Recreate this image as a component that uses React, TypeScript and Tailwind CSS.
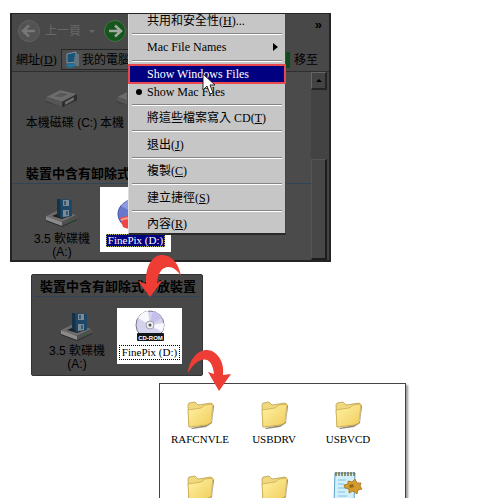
import React from "react";

const SERIF = "font-['Liberation_Serif','Noto_Sans_CJK_TC',serif]";
const SANS = "font-['Liberation_Sans','Noto_Sans_CJK_TC',sans-serif]";

function DriveIcon() {
  return (
    <svg width="34" height="20" viewBox="0 0 34 20" aria-hidden="true">
      <path d="M1 9 15 2l17 4v6L18 19 1 14z" fill="#343434" />
      <path d="M1 9 15 2l17 4-15 8z" fill="#6a6a6a" />
      <path d="M7 8.500 16 4l9 2-9 4z" fill="#585858" stroke="#7c7c7c" strokeWidth=".6" />
      <path d="M1 9v4l16 6v-5z" fill="#565656" />
      <path d="m17 14 15-8v6l-15 7z" fill="#2d2d2d" />
      <path d="m20 14 9-5v3l-9 5z" fill="#6c6c6c" />
    </svg>
  );
}

function FloppyIcon() {
  return (
    <svg width="34" height="30" viewBox="0 0 34 30" aria-hidden="true">
      <path d="M1 18 13 12l19 5v5l-15 7L1 23z" fill="#2b2b2b" />
      <path d="M1 18 13 12l19 5-15 7z" fill="#6c6c6c" />
      <path d="M1 18v4l16 6v-4z" fill="#8b8b8b" />
      <path d="m17 24 15-7v4l-15 7z" fill="#505050" />
      <path d="m7 18 7-3 11 3-8 3z" fill="#202020" />
      <path d="m12 1 4 0v19l-4-3z" fill="#163247" />
      <path d="m15 1 12 1v16l-11 2z" fill="#1c4766" />
      <path d="m18 2 6 0v6l-6 0z" fill="#7d8a93" />
      <path d="m18 12 6 0v6l-6 1z" fill="#7d8a93" />
      <path d="M20 3v4M22 13v4" stroke="#234b69" strokeWidth="1.500" />
      <path d="m23 24 5-2" stroke="#315c38" strokeWidth="1.500" />
    </svg>
  );
}

function PhotoDiscIcon() {
  return (
    <svg width="38" height="32" viewBox="0 0 38 32" aria-hidden="true">
      <ellipse cx="19" cy="16" rx="18" ry="15" fill="#6878cc" stroke="#4251a8" />
      <path d="M19 16 4 8a18 15 0 0 1 15-7z" fill="#8d9ae0" />
      <path d="M3 20c5-3 26-3 32 0l-4 9c-6 3-20 3-25 0z" fill="#f04444" />
      <path d="M4 22c4-2 8-2 12-1" stroke="#ff9b91" strokeWidth="2" fill="none" />
    </svg>
  );
}

function CdRomIcon() {
  return (
    <svg width="32" height="32" viewBox="0 0 32 32" aria-hidden="true">
      <circle cx="16" cy="15" r="14" fill="#d5d2ee" stroke="#77758e" />
      <path d="M16 15 4 8a14 14 0 0 1 10-7z" fill="#f8f8ff" />
      <path d="m16 15 12 7a14 14 0 0 0 2-9z" fill="#f7f7ff" />
      <path d="M16 15 28 8a14 14 0 0 0-9-7z" fill="#c4c0ea" />
      <circle cx="16" cy="15" r="4" fill="#eee" stroke="#a09db5" />
      <circle cx="16" cy="15" r="1.500" fill="#555" />
      <rect x="3" y="23" width="27" height="8" rx="1" fill="#101515" />
      <text x="16.500" y="29.500" textAnchor="middle" fontSize="6" fontWeight="700" fontFamily="Liberation Sans, sans-serif" fill="#fff">
        CD-ROM
      </text>
    </svg>
  );
}

function FolderIcon() {
  return (
    <svg width="28" height="28" viewBox="0 0 28 28" aria-hidden="true">
      <defs>
        <linearGradient id="folder" x1="0" y1="0" x2="1" y2="1">
          <stop offset="0" stopColor="#fff3a6" />
          <stop offset="1" stopColor="#f0cc5a" />
        </linearGradient>
      </defs>
      <path d="m5 27 16-3 5-4 1-16 1 1-2 17-6 4-14 2z" fill="#8d8670" />
      <path d="M2 4 3 2l6-1 2 2 1 1 13-2 1 1-2 18-6 3-15 2z" fill="#f0d87e" stroke="#b39542" strokeWidth=".7" />
      <path d="m2 9 13-2 4-3 8-1-2 19-5 2-17 2z" fill="url(#folder)" stroke="#c7a448" strokeWidth=".7" />
    </svg>
  );
}

function NotepadIcon() {
  return (
    <svg width="30" height="34" viewBox="0 0 30 34" aria-hidden="true">
      <path d="M2 3h20l-1 30H1z" fill="#d3effc" stroke="#5ba2c8" />
      <path d="M3 2v4M6 2v4M9 2v4M12 2v4M15 2v4M18 2v4M21 2v4" stroke="#777044" strokeWidth="1.500" />
      <path d="M5 10h8M5 14h6M5 18h8M5 22h7M5 26h9" stroke="#7cc3e0" />
      <path d="m11 15 4-1 0-3 4 1 3-3 2 4 4 0-1 3 2 3-4 1-1 4-4-3-4 2 0-4-4-1z" fill="#d59b2c" stroke="#9a7222" strokeWidth=".8" />
      <path d="m16 15 4-1 1 3-4 1z" fill="#8c681f" />
    </svg>
  );
}

function CursorIcon() {
  return (
    <svg width="14" height="22" viewBox="0 0 14 22" aria-hidden="true" className="pointer-events-none absolute left-[73px] top-[59px]">
      <path d="M1 1v16l4-4 3 8 3-1-3-8h5z" fill="#fff" stroke="#111" strokeWidth=".9" />
    </svg>
  );
}

function NavIcon({ forward = false }: { forward?: boolean }) {
  return (
    <svg width="24" height="24" viewBox="0 0 24 24" aria-hidden="true">
      <circle cx="12" cy="12" r="10.500" fill={forward ? "#16551b" : "#535353"} stroke={forward ? "#417544" : "#626262"} />
      <path d={forward ? "M6 12h11M12 6.500l6 5.500-6 5.500" : "M18 12H7M12 6.500 6 12l6 5.500"} fill="none" stroke={forward ? "#a3aaa3" : "#777"} strokeWidth="2.500" />
    </svg>
  );
}

function Item({ icon, children, className = "" }: { icon: React.ReactNode; children: React.ReactNode; className?: string }) {
  return (
    <figure className={"flex flex-col items-center " + className}>
      {icon}
      <figcaption className="whitespace-nowrap text-center text-[12px] leading-[13px]">{children}</figcaption>
    </figure>
  );
}

function Separator() {
  return (
    <div role="separator" className="flex flex-1 flex-col justify-center px-[3px]">
      <div className="h-px bg-[#858585]" />
      <div className="h-px bg-white" />
    </div>
  );
}

function MenuItem({ children, selected = false }: { children: React.ReactNode; selected?: boolean }) {
  return (
    <button
      type="button"
      role="menuitem"
      className={
        "relative flex h-[18px] w-full shrink-0 items-center whitespace-nowrap pl-[18px] text-left text-[12px] leading-[18px] " +
        (selected ? "bg-[#000080] text-white outline-2 -outline-offset-1 outline-[#e8484e]" : "text-black")
      }
    >
      {children}
    </button>
  );
}

function ContextMenu() {
  return (
    <div role="menu" className={"absolute left-[116px] top-0 h-[221px] w-[158px] border-b-2 border-l border-r border-b-[#292929] border-l-[#ddd] border-r-[#444] bg-[#c6c6c6] " + SERIF}>
      <div className="-mt-[2px] flex h-[221px] flex-col">
        <MenuItem>共用和安全性(<u>H</u>)...</MenuItem>
        <Separator />
        <MenuItem>
          Mac File Names
          <svg width="5" height="8" viewBox="0 0 5 8" aria-hidden="true" className="ml-auto mr-[7px]">
            <path d="m0 0 5 4-5 4z" />
          </svg>
        </MenuItem>
        <Separator />
        <MenuItem selected>Show Windows Files</MenuItem>
        <MenuItem>
          <span className="absolute left-[7px] size-[6px] rounded-full bg-black" />
          Show Mac Files
        </MenuItem>
        <Separator />
        <MenuItem>將這些檔案寫入 CD(<u>T</u>)</MenuItem>
        <Separator />
        <MenuItem>退出(<u>J</u>)</MenuItem>
        <Separator />
        <MenuItem>複製(<u>C</u>)</MenuItem>
        <Separator />
        <MenuItem>建立捷徑(<u>S</u>)</MenuItem>
        <Separator />
        <MenuItem>內容(<u>R</u>)</MenuItem>
      </div>
      <CursorIcon />
    </div>
  );
}

function GroupTitle({ children, className }: { children: React.ReactNode; className: string }) {
  return (
    <h2 className={"overflow-hidden whitespace-nowrap border-b border-[#304456] text-[13px] font-bold leading-[18px] " + className}>
      {children}
    </h2>
  );
}

function ExplorerWindow() {
  return (
    <section className="relative ml-[10px] flex h-[249px] w-[321px] shrink-0 flex-col border-2 border-t border-[#242424] bg-[#4b4b4b]">
      <div className="flex h-[34px] items-center bg-[#484848] pl-[5px] text-[#686868]">
        <button type="button" className="flex items-center gap-[4px] text-[12px]">
          <NavIcon />
          <span>上一頁</span>
        </button>
        <span className="ml-[8px] border-x-[3px] border-t-[3px] border-x-transparent border-t-[#666]" />
        <button type="button" aria-label="下一頁" className="ml-[8px]">
          <NavIcon forward />
        </button>
        <button type="button" className="mb-[14px] ml-auto mr-[7px] text-[13px] font-bold leading-none text-black">»</button>
      </div>
      <div className="flex h-[23px] items-center bg-[#484848] text-[12px]">
        <label htmlFor="address" className={"w-[49px] whitespace-nowrap pl-[4px] " + SERIF}>網址(<u>D</u>)</label>
        <div className="flex h-[21px] min-w-0 flex-1 items-center border border-[#262626] bg-[#4d4d4d]">
          <svg width="20" height="18" viewBox="0 0 20 18" aria-hidden="true" className="shrink-0">
            <path d="m5 3 9-2v10l-9 1z" fill="#16547a" stroke="#7898a5" />
            <path d="M13 3h4v12h-6z" fill="#66747a" />
            <path d="m3 14 9-2 2 3-7 2z" fill="#22739c" />
          </svg>
          <input id="address" defaultValue="我的電腦" className="w-full min-w-0 bg-transparent outline-none" />
        </div>
        <button type="button" className="flex items-center gap-[4px] pl-[2px] pr-[11px]">
          <svg width="14" height="16" viewBox="0 0 14 16" aria-hidden="true">
            <rect width="14" height="16" fill="#124b1b" />
            <path d="M2 8h6M6 5l3 3-3 3" fill="none" stroke="#777" strokeWidth="2" />
          </svg>
          移至
        </button>
      </div>
      <div className="flex min-h-0 flex-1 border-t border-[#2f2f2f]">
        <div className="min-w-0 flex-1 overflow-hidden">
          <div className="flex pl-[12px] pt-[16px]">
            <Item className="w-[75px] gap-[9px]" icon={<DriveIcon />}>本機磁碟 (C:)</Item>
            <figure className="flex w-[28px] flex-col gap-[9px] overflow-hidden pl-px">
              <div className="pl-[16px]"><DriveIcon /></div>
              <figcaption className="whitespace-nowrap text-[12px] leading-[13px]">本機</figcaption>
            </figure>
          </div>
          <div className="pt-[35px]">
            <GroupTitle className="pl-[14px]">裝置中含有卸除式</GroupTitle>
          </div>
          <div className="flex pl-[12px] pt-[3px]">
            <Item className="w-[76px] gap-[5px] pt-[11px]" icon={<FloppyIcon />}>3.5 軟碟機<br />(A:)</Item>
            <figure className={"flex h-[65px] w-[71px] flex-col items-center gap-[4px] bg-white pt-[11px] " + SERIF}>
              <PhotoDiscIcon />
              <figcaption className="whitespace-nowrap bg-[#000080] px-[2px] text-[11px] leading-[13px] text-white outline-1 -outline-offset-1 outline-dotted outline-[#bcbc40]">FinePix (D:)</figcaption>
            </figure>
          </div>
        </div>
        <div className="flex w-[18px] shrink-0 flex-col justify-between bg-[#434343]">
          <button type="button" aria-label="向上捲動" className="flex h-[18px] w-[16px] items-center justify-center border border-b-2 border-r-2 border-[#242424] border-l-[#666] border-t-[#666]">
            <span className="border-x-[3px] border-b-[3px] border-x-transparent border-b-black" />
          </button>
          <div className="h-[101px] w-[16px] border border-b-2 border-r-2 border-[#1d1d1d] border-l-[#555] border-t-[#555] bg-[#474747]" />
        </div>
      </div>
      <ContextMenu />
    </section>
  );
}

function RemovableDevices() {
  return (
    <section className="relative ml-[31px] mt-[12px] h-[102px] w-[172px] shrink-0 rounded-[2px] border border-[#333] bg-[#474747]">
      <div className="px-[2px] pt-[3px]">
        <GroupTitle className="pl-[6px]">裝置中含有卸除式存放裝置</GroupTitle>
      </div>
      <div className="flex pl-[5px] pt-[11px]">
        <Item className="w-[80px] gap-[3px] pt-[4px]" icon={<FloppyIcon />}>3.5 軟碟機<br />(A:)</Item>
        <figure className={"flex h-[56px] w-[65px] flex-col items-center gap-[4px] bg-white pt-[2px] " + SERIF}>
          <CdRomIcon />
          <figcaption className="whitespace-nowrap px-[2px] text-[11px] leading-[13px] outline-1 outline-dotted outline-black">FinePix (D:)</figcaption>
        </figure>
      </div>
      <svg width="48" height="46" viewBox="136 252 48 46" aria-hidden="true" className="absolute -top-[23px] left-[104px]">
        <path d="M181 276c-7-12-22-14-24 7l6-3-13 17-12-16 8 3c-1-19 7-29 16-29 10 0 17 9 19 21z" fill="#ee3d35" />
      </svg>
    </section>
  );
}

const FOLDERS = ["RAFCNVLE", "USBDRV", "USBVCD"];

function FilesWindow() {
  return (
    <section className={"relative ml-[159px] mt-[7px] min-h-0 w-[247px] flex-1 border border-b-0 border-[#444] bg-white shadow-[2px_2px_2px_#999] " + SERIF}>
      <div className="grid grid-cols-[repeat(3,74px)] gap-y-[28px] pl-[3px] pt-[17px]">
        {FOLDERS.map((name) => (
          <figure key={name} className="flex h-[46px] flex-col items-center gap-[4px]">
            <FolderIcon />
            <figcaption className="text-[11px] leading-[13px]">{name}</figcaption>
          </figure>
        ))}
        <div className="flex h-[20px] justify-center"><FolderIcon /></div>
        <div className="flex h-[20px] justify-center"><FolderIcon /></div>
        <div className="-mt-[5px] flex h-[25px] justify-center"><NotepadIcon /></div>
      </div>
      <svg width="48" height="46" viewBox="186 347 48 46" aria-hidden="true" className="absolute -top-[37px] left-[26px]">
        <path d="M188 373c9-16 24-20 26 1l-6-2 11 19 12-17-8 1c2-14-7-25-16-25-10 0-18 10-19 23z" fill="#ee3d35" />
      </svg>
    </section>
  );
}

export default function App() {
  return (
    <main className={"flex h-screen flex-col overflow-hidden bg-white pt-[13px] text-black " + SANS}>
      <ExplorerWindow />
      <RemovableDevices />
      <FilesWindow />
    </main>
  );
}
